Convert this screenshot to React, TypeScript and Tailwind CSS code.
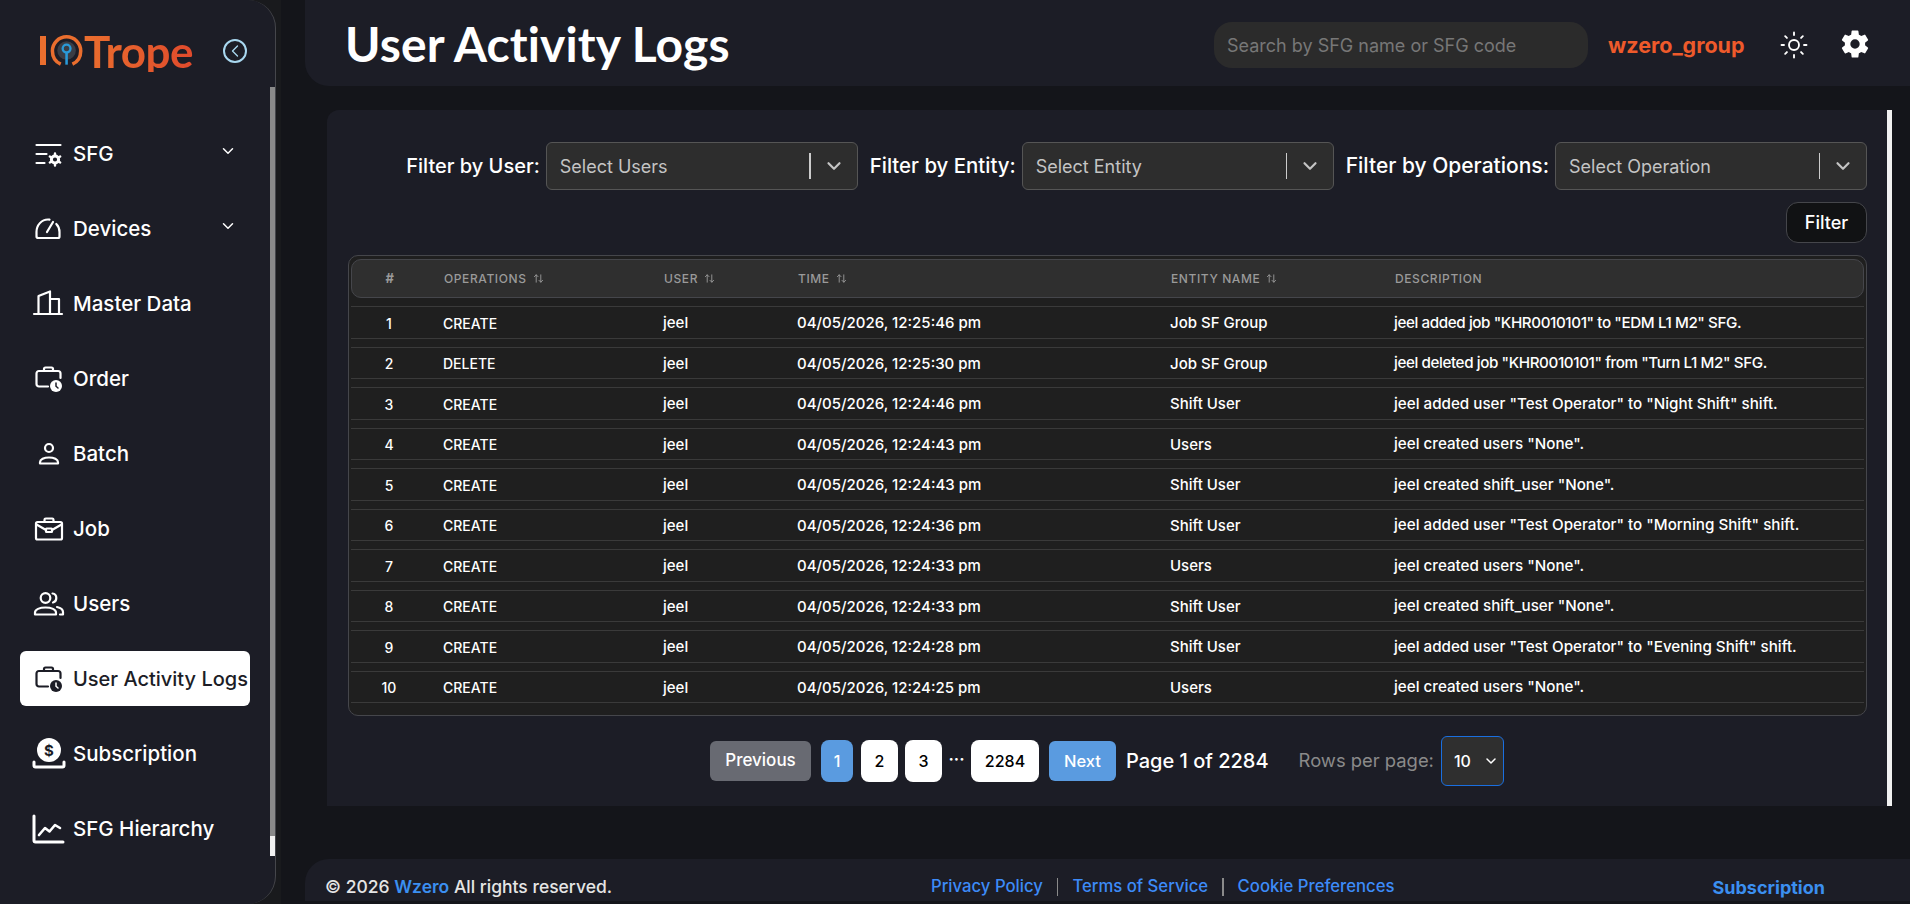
import { ArrowUpDown, ChevronDown, ChevronLeft, Sun } from 'lucide-react'
import { IoSettingsSharp } from 'react-icons/io5'
import type { ReactNode } from 'react'

interface LogRow {
  id: number
  op: string
  time: string
  entity: string
  description: string
  tight?: boolean
}

const logs: LogRow[] = [
  { id: 1, op: 'CREATE', time: '04/05/2026, 12:25:46 pm', entity: 'Job SF Group', description: 'jeel added job "KHR0010101" to "EDM L1 M2" SFG.', tight: true },
  { id: 2, op: 'DELETE', time: '04/05/2026, 12:25:30 pm', entity: 'Job SF Group', description: 'jeel deleted job "KHR0010101" from "Turn L1 M2" SFG.', tight: true },
  { id: 3, op: 'CREATE', time: '04/05/2026, 12:24:46 pm', entity: 'Shift User', description: 'jeel added user "Test Operator" to "Night Shift" shift.' },
  { id: 4, op: 'CREATE', time: '04/05/2026, 12:24:43 pm', entity: 'Users', description: 'jeel created users "None".' },
  { id: 5, op: 'CREATE', time: '04/05/2026, 12:24:43 pm', entity: 'Shift User', description: 'jeel created shift_user "None".' },
  { id: 6, op: 'CREATE', time: '04/05/2026, 12:24:36 pm', entity: 'Shift User', description: 'jeel added user "Test Operator" to "Morning Shift" shift.' },
  { id: 7, op: 'CREATE', time: '04/05/2026, 12:24:33 pm', entity: 'Users', description: 'jeel created users "None".' },
  { id: 8, op: 'CREATE', time: '04/05/2026, 12:24:33 pm', entity: 'Shift User', description: 'jeel created shift_user "None".' },
  { id: 9, op: 'CREATE', time: '04/05/2026, 12:24:28 pm', entity: 'Shift User', description: 'jeel added user "Test Operator" to "Evening Shift" shift.' },
  { id: 10, op: 'CREATE', time: '04/05/2026, 12:24:25 pm', entity: 'Users', description: 'jeel created users "None".' },
]

const gridCols = 'grid grid-cols-[76px_220px_134px_373px_224px_1fr] items-center'

// all sidebar icons sit on the same 28x28 box
function Icon({ children }: { children: ReactNode }) {
  return (
    <svg viewBox="0 0 28 28" fill="none" stroke="currentColor" strokeWidth={2.2} strokeLinecap="round" strokeLinejoin="round" className="h-7 w-7 shrink-0 overflow-visible">
      {children}
    </svg>
  )
}

const SfgIcon = () => (
  <Icon>
    <path d="M1.500 5h24M1.500 14h10M1.500 23h8" />
    <circle cx="20" cy="19.500" r="3.600" strokeWidth={3} />
    <path d="M20 13.500v2M20 23.500v2M14.800 16.500l1.700 1M23.500 21.500l1.700 1M14.800 22.500l1.700-1M23.500 17.500l1.700-1" strokeWidth={2.400} />
  </Icon>
)
const DevicesIcon = () => (
  <Icon>
    <path d="M3.500 23H23c1 0 1.500-.600 1.500-1.500V17c0-3-1.200-6-3.200-8" />
    <path d="M14.500 4.600c-.500-.100-1-.100-1.500-.100C6.700 4.500 1.500 10 1.500 17v4.500c0 .900.600 1.500 2 1.500" />
    <path d="M12 17l6-10" />
  </Icon>
)
const MasterIcon = () => (
  <Icon>
    <path d="M-1 24h28" />
    <path d="M3.500 24V6L15 1.500V24M15 9h9v15" />
  </Icon>
)
const BriefcaseClockIcon = ({ active }: { active?: boolean }) => (
  <Icon>
    <path d="M13 21.500H4c-1.500 0-2.500-1-2.500-2.500V8.500C1.500 7 2.500 6 4 6h19c1.500 0 2.500 1 2.500 2.500V13" />
    <path d="M9 6V4c0-1 .700-1.500 1.500-1.500h6c.800 0 1.500.500 1.500 1.500v2" />
    <circle cx="21" cy="21" r="6" fill="currentColor" stroke="none" />
    <path d="M21 18v3.200l2 1.800" stroke={active ? '#fff' : '#1c1d26'} strokeWidth={1.500} />
  </Icon>
)
const BatchIcon = () => (
  <Icon>
    <circle cx="14" cy="8" r="4" />
    <path d="M5 23.500v-1.300c0-2.700 4-4.700 9-4.700s9 2 9 4.700v1.300z" />
  </Icon>
)
const JobIcon = () => (
  <Icon>
    <rect x="1" y="7" width="26" height="17.500" rx="1.500" />
    <path d="M9.500 7V4.800c0-.800.500-1.300 1.300-1.300h6.400c.800 0 1.300.500 1.300 1.300V7" />
    <path d="M1.500 9.500l9.500 5.500M26.500 9.500L17 15" />
    <rect x="11" y="13.500" width="6" height="3.500" rx=".500" />
  </Icon>
)
const UsersIcon = () => (
  <Icon>
    <circle cx="10.500" cy="8" r="4.800" />
    <path d="M0 24.500v-2c0-3 4.500-5 10.500-5s10.500 2 10.500 5v2z" />
    <path d="M17.500 3.500c2.500.300 3.800 2.300 3.800 4.500s-1.300 4-3.300 4.500M22 17c3.500.800 6 2.800 6 5v2.500h-3" />
  </Icon>
)
const SubscriptionIcon = () => (
  <Icon>
    <circle cx="14" cy="10" r="12" fill="currentColor" stroke="none" />
    <text x="14" y="15.500" textAnchor="middle" fontSize="15" fontWeight="700" fontFamily="Inter, sans-serif" fill="#1c1d26" stroke="none">$</text>
    <path d="M-1 22v3.500c0 1 .500 1.500 1.500 1.500h27c1 0 1.500-.500 1.500-1.500V22" strokeWidth={3} />
  </Icon>
)
const HierarchyIcon = () => (
  <Icon>
    <path d="M-1 1v24.500c0 1 .500 1.500 1.500 1.500H28" strokeWidth={3} />
    <path d="M4 20l6-7 4.500 3.500 5.500-6.500 5 3" strokeWidth={2.600} />
  </Icon>
)

const navItems: { label: string; icon: ReactNode; caret?: boolean; active?: boolean }[] = [
  { label: 'SFG', icon: <SfgIcon />, caret: true },
  { label: 'Devices', icon: <DevicesIcon />, caret: true },
  { label: 'Master Data', icon: <MasterIcon /> },
  { label: 'Order', icon: <BriefcaseClockIcon /> },
  { label: 'Batch', icon: <BatchIcon /> },
  { label: 'Job', icon: <JobIcon /> },
  { label: 'Users', icon: <UsersIcon /> },
  { label: 'User Activity Logs', icon: <BriefcaseClockIcon active />, active: true },
  { label: 'Subscription', icon: <SubscriptionIcon /> },
  { label: 'SFG Hierarchy', icon: <HierarchyIcon /> },
]

function Logo() {
  return (
    <div className="flex h-[42px] w-[153px] items-center text-[#e5602c]">
      <span className="h-[29px] w-[6px] bg-[#ea6e2e]" />
      <svg viewBox="0 0 36 36" className="ml-[3px] h-[36px] w-[36px]" fill="none">
        <path d="M12 31.500C6.500 29 3.500 24 3.500 18a14.500 14.500 0 0 1 29 0c0 6-3 11-8.500 13.500" stroke="#ea6e2e" strokeWidth={3.600} />
        <circle cx="18" cy="17.500" r="9.500" fill="#3a3d45" />
        <circle cx="18" cy="15.500" r="4" stroke="#2a9ad8" strokeWidth={2.400} />
        <path d="M18 19.500V32" stroke="#2a9ad8" strokeWidth={2.600} />
      </svg>
      <span className="bg-gradient-to-r from-[#ea6e2e] to-[#e04a2c] bg-clip-text font-[Lato,sans-serif] text-[44px] leading-[42px] font-bold tracking-[-0.5px] text-transparent">
        Trope
      </span>
    </div>
  )
}

function Sidebar() {
  return (
    <aside className="w-[281px] shrink-0 bg-[#191a1d]">
      <div className="relative h-full w-[276px] rounded-r-[28px] border-r border-[#45464b] bg-[#1c1d26]">
        <div className="flex h-[100px] items-center pt-[1px] pl-[40px]">
          <Logo />
          <button className="ml-[30px] flex h-6 w-6 items-center justify-center rounded-full border-2 border-[#a9d8f0] text-[#a9d8f0]">
            <ChevronLeft size={20} strokeWidth={1.6} />
          </button>
        </div>
        <nav className="mt-[26px] flex flex-col gap-5 pl-5">
          {navItems.map((item) => (
            <div
              key={item.label}
              className={`flex h-[55px] w-[230px] items-center rounded-md pl-[15px] font-medium whitespace-nowrap ${
                item.active ? 'bg-white text-[20px] text-[#1c1d26]' : 'text-[20.5px] text-white'
              }`}
            >
              {item.icon}
              <span className="mt-[1px] ml-[10px]">{item.label}</span>
              {item.caret && <ChevronDown size={18} strokeWidth={2} className="mb-[6px] ml-auto mr-[13px]" />}
            </div>
          ))}
        </nav>
        {/* sidebar scrollbar */}
        <div className="absolute top-[87px] right-0 w-[5px]">
          <div className="h-[749px] bg-[#8a8a8a]" />
          <div className="h-[20px] bg-[#f1f1f1]" />
        </div>
      </div>
    </aside>
  )
}

function Header() {
  return (
    <header className="flex h-[86px] items-center rounded-bl-[24px] bg-[#1c1d26] pr-[40px] pl-[40px]">
      <h1 className="mt-[1px] font-[Lato,sans-serif] text-[48px] font-bold tracking-[0.1px] text-white">User Activity Logs</h1>
      <input
        placeholder="Search by SFG name or SFG code"
        className="mt-[4px] ml-auto h-[46px] w-[374px] rounded-[18px] bg-[#2b2b2b] px-[13px] text-[18px] text-white outline-none placeholder:text-[#777]"
      />
      <span className="mt-[4px] ml-[20px] w-[136px] text-[21.5px] font-bold whitespace-nowrap text-[#ee5a2b]">wzero_group</span>
      <Sun size={30} strokeWidth={1.5} className="mt-[3px] ml-[35px] text-white" />
      <IoSettingsSharp size={30} className="mt-[2px] ml-[31px] text-white" />
    </header>
  )
}

function FilterSelect({ label, labelSize, placeholder, heavy }: { label: string; labelSize: string; placeholder: string; heavy?: boolean }) {
  return (
    <div className="flex items-center gap-[6px]">
      <span className={`${labelSize} font-medium whitespace-nowrap text-white`}>{label}</span>
      <div className="flex h-12 w-[312px] items-center rounded-md border border-[#555] bg-[#2d2d2d] pl-[13px] text-[18px] text-[#c4c4c4]">
        <span className="mt-[1px]">{placeholder}</span>
        <span className={`ml-auto h-[26px] bg-[#ccc] ${heavy ? 'w-[2px]' : 'w-px'}`} />
        <ChevronDown size={22} strokeWidth={2.4} className="mx-[12px] text-[#c4c4c4]" />
      </div>
    </div>
  )
}

function HeadCell({ label, sort }: { label: string; sort?: boolean }) {
  return (
    <div className="flex items-center gap-[6px] pl-4">
      {label}
      {sort && <ArrowUpDown size={11} strokeWidth={2} />}
    </div>
  )
}

function LogsTable() {
  return (
    <div className="rounded-[10px] border border-[#45464b] bg-[#1f1f1f] px-[2px] pt-[3px] pb-[12px]">
      <div className={`${gridCols} h-[39px] rounded-[10px] border border-[#45464b] bg-[#2f2f2f] text-[12px] font-medium tracking-[0.6px] text-[#9a9a9a] uppercase`}>
        <div className="text-center text-[13px] font-bold">#</div>
        <HeadCell label="Operations" sort />
        <HeadCell label="User" sort />
        <HeadCell label="Time" sort />
        <HeadCell label="Entity Name" sort />
        <HeadCell label="Description" />
      </div>
      <div className="mt-[1px]">
        {logs.map((log) => (
          <div key={log.id} className={`${gridCols} mt-2 h-[32.5px] border-y border-[#3a3a3a] pt-[2px] text-[15px] font-medium text-white`}>
            <div className="text-center text-[14px]">{log.id}</div>
            <div className="pl-4 text-[14px]">{log.op}</div>
            <div className="pl-4">jeel</div>
            <div className="pl-4">{log.time}</div>
            <div className="pl-4">{log.entity}</div>
            <div className={`pl-4 text-[15.2px] ${log.tight ? 'tracking-[-0.4px]' : ''}`}>{log.description}</div>
          </div>
        ))}
      </div>
    </div>
  )
}

function Pagination() {
  return (
    <div className="mt-5 flex h-[50px] items-center pl-[362px] font-medium">
      <button className="h-10 w-[101px] rounded-md bg-[#686a72] text-[17px] text-white">Previous</button>
      <button className="ml-[10px] h-[42px] w-8 rounded-lg bg-[#5a9be0] text-[16px] text-white">1</button>
      <button className="ml-2 h-[42px] w-[37px] rounded-lg bg-white text-[16px] text-black">2</button>
      <button className="ml-[7px] h-[42px] w-[37px] rounded-lg bg-white text-[16px] text-black">3</button>
      <span className="mt-[-4px] w-[29px] text-center text-[16px] leading-none font-bold text-white">···</span>
      <button className="h-[42px] w-[68px] rounded-lg bg-white text-[16px] text-black">2284</button>
      <button className="ml-[10px] h-10 w-[67px] rounded-md bg-[#5a9be0] text-[16.5px] text-white">Next</button>
      <span className="ml-[10px] text-[20px] whitespace-nowrap text-white">Page 1 of 2284</span>
      <span className="ml-[30px] text-[18.4px] font-normal whitespace-nowrap text-[#8a8a8a]">Rows per page:</span>
      <div className="ml-[7px] flex h-[50px] w-[63px] items-center rounded-md border border-[#1a6fe0] bg-[#2f2f2f] pl-3 text-[16px] text-white">
        10
        <ChevronDown size={16} strokeWidth={2.2} className="ml-auto mr-[4px]" />
      </div>
    </div>
  )
}

function Footer() {
  return (
    <footer className="mt-[53px] mb-[3px] flex h-[42px] items-center rounded-tl-[24px] bg-[#1c1d26] pt-[14px] pl-[20px] text-[17.5px] font-medium text-[#e5e5e5]">
      <div className="w-[606px] whitespace-nowrap">
        © 2026 <span className="font-semibold text-[#3b8ff0]">Wzero</span> All rights reserved.
      </div>
      <div className="flex items-center text-[16.7px] whitespace-nowrap text-[#3d8bf8]">
        <span>Privacy Policy</span>
        <span className="mx-[14px] h-[18px] w-[1.5px] bg-[#8a8a8a]" />
        <span>Terms of Service</span>
        <span className="mx-[14px] h-[18px] w-[1.5px] bg-[#8a8a8a]" />
        <span>Cookie Preferences</span>
      </div>
      <span className="ml-[318px] text-[18px] font-bold text-[#3b8ff0]">Subscription</span>
    </footer>
  )
}

export default function App() {
  return (
    <div className="flex h-screen w-full overflow-hidden bg-[#14151a] font-[Inter,sans-serif]">
      <Sidebar />
      <main className="flex min-w-0 flex-1 flex-col pl-6">
        <Header />
        <section className="mt-[24px] mr-[18px] ml-[22px] flex h-[696px] rounded-tl-xl bg-[#1c1d26]">
          <div className="min-w-0 flex-1 pt-8 pr-5 pl-[21px]">
            <div className="flex justify-end gap-3">
              <FilterSelect label="Filter by User:" labelSize="text-[20px]" placeholder="Select Users" heavy />
              <FilterSelect label="Filter by Entity:" labelSize="text-[20.4px]" placeholder="Select Entity" />
              <FilterSelect label="Filter by Operations:" labelSize="text-[21px]" placeholder="Select Operation" />
            </div>
            <div className="mt-3 flex justify-end">
              <button className="h-[41px] w-[81px] rounded-xl border border-[#45464b] bg-[#111214] text-[18px] font-medium text-white">Filter</button>
            </div>
            <div className="mt-3">
              <LogsTable />
            </div>
            <Pagination />
          </div>
          <div className="w-[5px] bg-[#f1f1f1]" />
        </section>
        <Footer />
      </main>
    </div>
  )
}
